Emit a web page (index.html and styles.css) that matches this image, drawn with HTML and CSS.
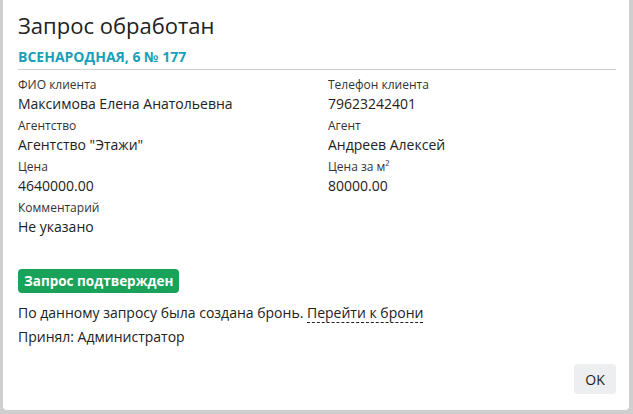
FILE: index.html
```html
<!DOCTYPE html>
<html lang="ru">
<head>
<meta charset="utf-8">
<link rel="stylesheet" href="styles.css">
</head>
<body>
<div class="modal">
  <div class="head">
    <h1 class="title">Запрос обработан</h1>
    <div class="subtitle">ВСЕНАРОДНАЯ, 6 № 177</div>
  </div>
  <div class="grid">
    <div class="field"><div class="label">ФИО клиента</div><div class="value">Максимова Елена Анатольевна</div></div>
    <div class="field"><div class="label">Телефон клиента</div><div class="value">79623242401</div></div>
    <div class="field"><div class="label">Агентство</div><div class="value">Агентство "Этажи"</div></div>
    <div class="field"><div class="label">Агент</div><div class="value">Андреев Алексей</div></div>
    <div class="field"><div class="label">Цена</div><div class="value">4640000.00</div></div>
    <div class="field"><div class="label">Цена за м²</div><div class="value">80000.00</div></div>
    <div class="field"><div class="label">Комментарий</div><div class="value">Не указано</div></div>
  </div>
  <div class="status">
    <span class="badge">Запрос подтвержден</span>
    <p class="line">По данному запросу была создана бронь. <a class="link" href="#">Перейти к брони</a></p>
    <p class="line">Принял: Администратор</p>
  </div>
  <div class="footer">
    <button class="ok">OK</button>
  </div>
</div>
<div class="behind">
  <span>5</span><span>327</span><span>2201.20</span><span>2201.20</span><span>44.20</span>
</div>
</body>
</html>
```
FILE: styles.css
```css
html, body {
  margin: 0;
  padding: 0;
  height: 414px;
  overflow: hidden;
}
body {
  background: #cfcfcf;
  font-family: "Open Sans", "Noto Sans", sans-serif;
  color: #222;
}
.modal {
  margin-left: 3px;
  width: 626px;
  height: 410px;
  background: #fff;
  box-sizing: border-box;
  padding: 0 13px 0 15px;
  display: flex;
  flex-direction: column;
  border-radius: 0 0 4px 4px;
}
.head {
  border-bottom: 1px solid #cfcfcf;
  padding-top: 10px;
  padding-bottom: 3px;
}
.title {
  margin: 0;
  font-size: 22px;
  font-weight: 400;
  line-height: 30px;
  color: #222;
}
.subtitle {
  margin-top: 7px;
  font-size: 14px;
  font-weight: 700;
  color: #1aa0b8;
  line-height: 19px;
}
.grid {
  display: grid;
  grid-template-columns: 310px 1fr;
  row-gap: 3px;
  margin-top: 7px;
}
.field {
  display: flex;
  flex-direction: column;
}
.label {
  font-size: 12px;
  line-height: 16px;
  color: #333;
}
.value {
  font-size: 14px;
  line-height: 22px;
  color: #222;
}
.status {
  margin-top: 31px;
}
.badge {
  display: inline-block;
  background: #18a25a;
  color: #fff;
  font-size: 13.5px;
  font-weight: 700;
  line-height: 19px;
  padding: 3px 6px 2px 6px;
  border-radius: 4px;
}
.line {
  margin: 10px 0 0;
  font-size: 14px;
  line-height: 20px;
}
.line + .line {
  margin-top: 4px;
}
.link {
  color: #222;
  text-decoration: none;
  border-bottom: 1px dashed #222;
}
.footer {
  margin-top: auto;
  display: flex;
  justify-content: flex-end;
  padding-bottom: 16px;
}
.ok {
  font-family: "Open Sans", "Noto Sans", sans-serif;
  font-size: 14px;
  color: #222;
  background: #eceeef;
  border: none;
  border-radius: 4px;
  width: 42px;
  height: 30px;
  padding: 0;
}
.behind {
  display: flex;
  font-size: 14px;
  line-height: 14px;
  margin-top: 2px;
  color: #333;
}
.behind span:nth-child(1) { width: 107px; }
.behind span:nth-child(2) { width: 106px; }
.behind span:nth-child(3) { width: 90px; }
.behind span:nth-child(4) { width: 110px; }
```
